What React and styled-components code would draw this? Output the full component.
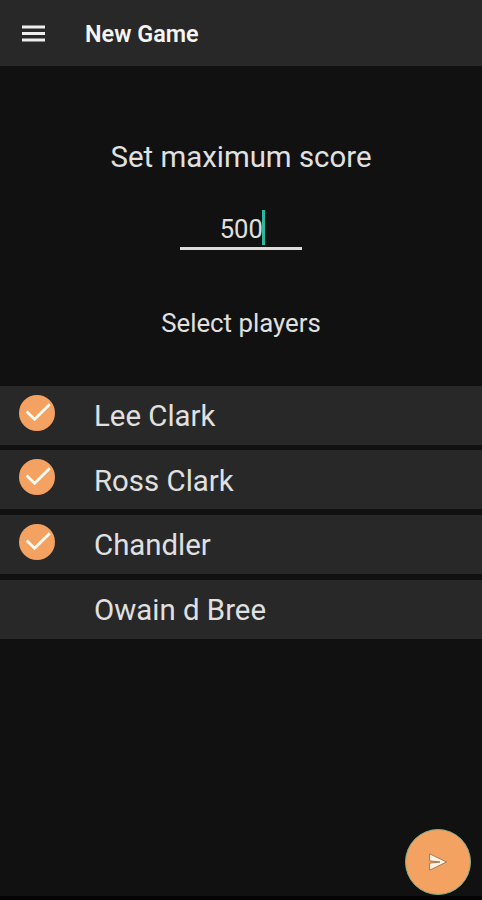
import React, { useState } from 'react'
import styled, { createGlobalStyle } from 'styled-components'

const BACKGROUND = '#111111'
const SURFACE = '#282828'
const TEXT = '#e0e0e0'
const ORANGE = '#f4a261'
const TEAL = '#2ab89f'

const GlobalStyle = createGlobalStyle`
  * {
    box-sizing: border-box;
  }

  body {
    margin: 0;
    background: ${BACKGROUND};
    font-family: Roboto, sans-serif;
  }
`

const Screen = styled.div`
  position: relative;
  display: flex;
  flex-direction: column;
  height: 100vh;
  overflow: hidden;
  border-bottom: 4px solid #040404;
  background: ${BACKGROUND};
  color: ${TEXT};
`

const Header = styled.header`
  display: flex;
  flex-shrink: 0;
  align-items: center;
  height: 66px;
  padding-left: 22px;
  background: ${SURFACE};
`

const MenuIcon = () => (
  <svg width="23" height="17" viewBox="0 0 23 17" display="block">
    <path d="M0 2H23M0 8.5H23M0 15H23" stroke="#eeeeee" strokeWidth="2.8" />
  </svg>
)

const MenuButton = styled.div`
  width: 63px;
`

const Title = styled.h1`
  margin: 2px 0 0;
  color: #f5f5f5;
  font-size: 23.4px;
  font-weight: 600;
  line-height: 28px;
`

const Settings = styled.section`
  display: flex;
  flex-direction: column;
  flex-shrink: 0;
  align-items: center;
  height: 319.5px;
  padding-top: 73px;
`

const Label = styled.div`
  font-size: ${({ $size }) => $size}px;
  line-height: 36px;
  white-space: nowrap;
`

const ScoreField = styled.div`
  display: flex;
  align-items: flex-start;
  justify-content: center;
  width: 122px;
  height: 40px;
  margin: 35px 0 55px;
  padding-left: 3px;
  border-bottom: 3px solid #dedcda;
  font-size: 25.6px;
  line-height: 38px;
`

const Cursor = styled.span`
  width: 3px;
  height: 35px;
  margin-left: -0.5px;
  background: ${TEAL};
`

const PlayerList = styled.div`
  display: flex;
  flex-direction: column;
  gap: 5.7px;
`

const PlayerRow = styled.div`
  display: flex;
  align-items: flex-start;
  height: 59px;
  padding: 9px 0 0 18.5px;
  background: ${SURFACE};
  cursor: pointer;
`

const CheckSlot = styled.div`
  width: 75.5px;
  height: 36px;
`

const PlayerName = styled.div`
  padding-top: 3.4px;
  font-size: 29.4px;
  line-height: 36px;
`

const StartButton = styled.div`
  position: absolute;
  right: 11.5px;
  bottom: 1px;
  display: flex;
  align-items: center;
  justify-content: center;
  width: 66px;
  height: 66px;
  border: 1px solid #7faf83;
  border-radius: 50%;
  background: ${ORANGE};
`

const CheckIcon = () => (
  <svg width="36" height="36" viewBox="0 0 36 36" display="block">
    <circle cx="18" cy="18" r="18" fill={ORANGE} />
    <path d="M7.6 16.6L15.6 24.2L30.8 9.2" fill="none" stroke="#fffaf4" strokeWidth="2.8" />
  </svg>
)

const SendIcon = () => (
  <svg width="20" height="20" viewBox="0 0 20 20">
    <path
      d="M1.6 1.8L18.6 10L1.6 18.2V11.2L12 10L1.6 8.8Z"
      fill="#fff4e8"
      stroke="#a0714c"
      strokeWidth="0.9"
    />
  </svg>
)

const PLAYERS = ['Lee Clark', 'Ross Clark', 'Chandler', 'Owain d Bree']

const App = () => {
  const [selected, setSelected] = useState(['Lee Clark', 'Ross Clark', 'Chandler'])

  const toggle = (name) =>
    setSelected((previous) =>
      previous.includes(name) ? previous.filter((p) => p !== name) : [...previous, name]
    )

  return (
    <>
      <GlobalStyle />
      <Screen>
        <Header>
          <MenuButton>
            <MenuIcon />
          </MenuButton>
          <Title>New Game</Title>
        </Header>
        <Settings>
          <Label $size={29.4}>Set maximum score</Label>
          <ScoreField>
            500
            <Cursor />
          </ScoreField>
          <Label $size={25.8}>Select players</Label>
        </Settings>
        <PlayerList>
          {PLAYERS.map((name) => (
            <PlayerRow key={name} onClick={() => toggle(name)}>
              <CheckSlot>{selected.includes(name) && <CheckIcon />}</CheckSlot>
              <PlayerName>{name}</PlayerName>
            </PlayerRow>
          ))}
        </PlayerList>
        <StartButton>
          <SendIcon />
        </StartButton>
      </Screen>
    </>
  )
}

export default App
